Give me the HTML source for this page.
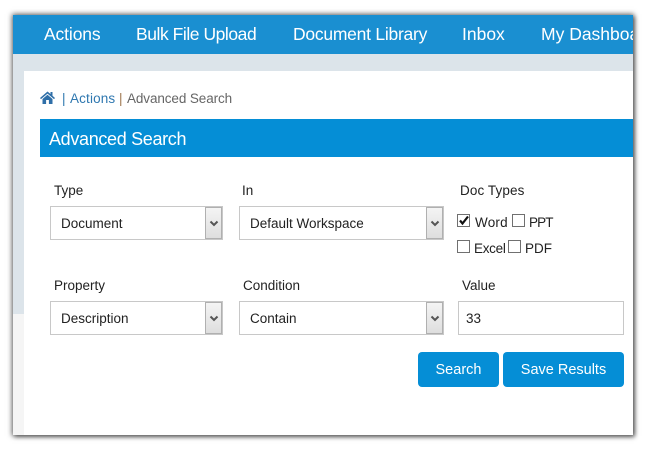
<!DOCTYPE html>
<html><head><meta charset="utf-8"><style>
html,body{margin:0;padding:0;background:#fff}
body{width:650px;height:450px;position:relative;overflow:hidden;font-family:"Liberation Sans",sans-serif}
#w{position:absolute;left:13px;top:15px;width:620px;height:420px;background:#fff;overflow:hidden}
#sh{position:absolute;left:13px;top:15px;width:620px;height:420px;box-shadow:0 0 5px 1px rgba(0,0,0,.6),2px 2px 4px rgba(0,0,0,.35)}
.t{position:absolute;white-space:nowrap;line-height:20px}
.a{position:absolute}
.n{color:#fff;font-size:17.5px;top:9px}
.l{color:#222;font-size:13.5px}
.s{position:absolute;height:32px;border:1px solid #c8c8c8;background:#fff;box-sizing:content-box}
.s span{position:absolute;left:10px;top:7px;font-size:13.5px;line-height:20px;color:#222;white-space:nowrap}
.s i{position:absolute;right:0;top:0;width:15px;height:30px;border:1px solid #b0b0b0;background:linear-gradient(#f4f4f4,#dedede)}
.s svg{position:absolute;left:3px;top:12px}
.c{position:absolute;width:11px;height:11px;border:1px solid #707070;background:#fff}
.b{position:absolute;top:337px;height:35px;background:#058ed6;border-radius:4px;color:#fff;font-size:14.5px;line-height:36px;text-align:center}
.bc{top:74px;font-size:13.5px}
</style></head><body>
<div id="sh"></div>
<div id="w">
<div class="a" style="left:0;top:0;width:620px;height:39px;background:#1a8fd1"></div>
<div class="a" style="left:0;top:39px;width:620px;height:17px;background:#dce4ea"></div>
<div class="a" style="left:0;top:56px;width:11px;height:243px;background:#dce4ea"></div>
<div class="a" style="left:0;top:299px;width:11px;height:121px;background:#f5f5f5"></div>
<div class="a" style="left:11px;top:56px;width:609px;height:364px;background:#fff;border-top-left-radius:6px"></div>
<div class="t n" style="left:31px;letter-spacing:-.12px">Actions</div>
<div class="t n" style="left:123px;letter-spacing:-.45px">Bulk File Upload</div>
<div class="t n" style="left:280px;letter-spacing:-.25px">Document Library</div>
<div class="t n" style="left:449px">Inbox</div>
<div class="t n" style="left:528px">My Dashboard</div>
<svg class="a" style="left:27px;top:76px" width="15" height="13" viewBox="0 0 15 13"><path d="M7.5 0.5L0 7l1 1.1L7.5 2.6 14 8.1 15 7l-2.5-2.2V1h-2v2L7.5.5zM2.5 8v5h3.6V9h2.8v4h3.6V8L7.5 3.8z" fill="#2f6fa8"/></svg>
<div class="t bc" style="left:49px;color:#2f78b0">|</div>
<div class="t bc" style="left:57px;color:#2f78b0;letter-spacing:.15px">Actions</div>
<div class="t bc" style="left:106px;color:#a07850">|</div>
<div class="t bc" style="left:114px;color:#666;letter-spacing:-.1px">Advanced Search</div>
<div class="a" style="left:27px;top:104px;width:593px;height:38px;background:#058ed6"></div>
<div class="t" style="left:36px;top:114px;font-size:18px;color:#fff;letter-spacing:-.33px">Advanced Search</div>

<div class="t l" style="left:41px;top:166px">Type</div>
<div class="t l" style="left:229px;top:166px">In</div>
<div class="t l" style="left:447px;top:166px;letter-spacing:.1px">Doc Types</div>

<div class="s" style="left:37px;top:191px;width:171px"><span>Document</span><i><svg width="10" height="7" viewBox="0 0 10 7"><path d="M1.5 1.5L5 5 8.5 1.5" fill="none" stroke="#555" stroke-width="2"/></svg></i></div>
<div class="s" style="left:226px;top:191px;width:203px"><span>Default Workspace</span><i><svg width="10" height="7" viewBox="0 0 10 7"><path d="M1.5 1.5L5 5 8.5 1.5" fill="none" stroke="#555" stroke-width="2"/></svg></i></div>

<div class="c" style="left:444px;top:199px"></div>
<svg class="a" style="left:445px;top:200px" width="12" height="11" viewBox="0 0 12 11"><path d="M2 5.5L4.5 8.5 10 1.5" fill="none" stroke="#111" stroke-width="2.2"/></svg>
<div class="t l" style="left:462px;top:198px;letter-spacing:.2px">Word</div>
<div class="c" style="left:499px;top:199px"></div>
<div class="t l" style="left:516px;top:198px;letter-spacing:-.9px">PPT</div>
<div class="c" style="left:444px;top:225px"></div>
<div class="t l" style="left:461px;top:224px;letter-spacing:-.3px">Excel</div>
<div class="c" style="left:495px;top:225px"></div>
<div class="t l" style="left:512px;top:224px">PDF</div>

<div class="t l" style="left:41px;top:261px">Property</div>
<div class="t l" style="left:230px;top:261px">Condition</div>
<div class="t l" style="left:449px;top:261px">Value</div>

<div class="s" style="left:37px;top:286px;width:171px"><span>Description</span><i><svg width="10" height="7" viewBox="0 0 10 7"><path d="M1.5 1.5L5 5 8.5 1.5" fill="none" stroke="#555" stroke-width="2"/></svg></i></div>
<div class="s" style="left:226px;top:286px;width:203px"><span>Contain</span><i><svg width="10" height="7" viewBox="0 0 10 7"><path d="M1.5 1.5L5 5 8.5 1.5" fill="none" stroke="#555" stroke-width="2"/></svg></i></div>
<div class="s" style="left:445px;top:286px;width:164px"><span style="left:7px">33</span></div>

<div class="b" style="left:405px;width:81px">Search</div>
<div class="b" style="left:490px;width:121px">Save Results</div>
</div>
</body></html>
